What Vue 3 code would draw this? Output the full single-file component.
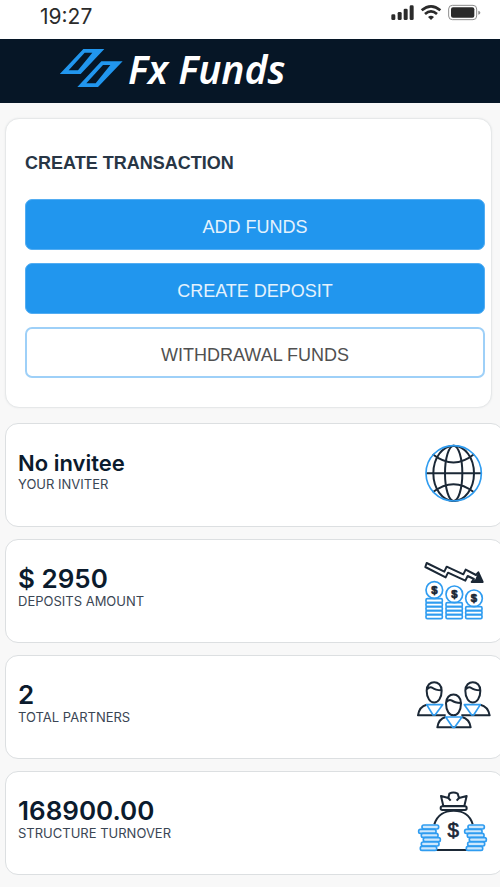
<script setup>
const stats = [
  { id: 'inviter', value: 'No invitee', label: 'YOUR INVITER', viewBox: '48 39 228 192', text: true },
  { id: 'deposits', value: '$ 2950', label: 'DEPOSITS AMOUNT', viewBox: '48 42 228 192' },
  { id: 'partners', value: '2', label: 'TOTAL PARTNERS', viewBox: '48 30 228 192' },
  { id: 'turnover', value: '168900.00', label: 'STRUCTURE TURNOVER', viewBox: '48 33 228 192' },
]

const columns = [
  { x: 78, cy: 135, top: 161, rows: 5 },
  { x: 138, cy: 148, top: 173, rows: 4 },
  { x: 197, cy: 160, top: 185, rows: 3 },
]

const pile = [
  [66, 135, 50],
  [56, 148, 52],
  [64, 160, 50],
  [70, 173, 51],
  [64, 186, 53],
  [61, 199, 49],
  [204, 135, 49],
  [194, 148, 52],
  [202, 160, 50],
  [208, 173, 51],
  [203, 186, 51],
  [199, 199, 49],
]
</script>

<template>
  <div class="page">
    <div class="status">
      <span class="time">19:27</span>
      <svg class="indicators" viewBox="60 9 276 60" aria-hidden="true">
        <g fill="#2b2b2b">
          <rect x="64" y="43" width="12" height="17" rx="4" />
          <rect x="83" y="36" width="12" height="24" rx="4" />
          <rect x="101" y="26" width="12" height="34" rx="4" />
          <rect x="119" y="16" width="12" height="44" rx="4" />
          <path d="M174 51Q183 43 192 51L183 60Z" />
          <rect x="243" y="22" width="70" height="31" rx="6" />
        </g>
        <g fill="none" stroke="#2b2b2b" stroke-width="8">
          <path d="M155 31Q183 7 211 31" />
          <path d="M165 42Q183 26 201 42" />
        </g>
        <rect x="236" y="16" width="84" height="43" rx="11" fill="none" stroke="#8c8c8c" stroke-width="3" />
        <path d="M325 32Q331 34 331 38T325 44Z" fill="#8c8c8c" />
      </svg>
    </div>

    <header class="header">
      <a class="brand" href="#">
        <svg class="mark" viewBox="180 144 189 120" aria-hidden="true">
          <path
            fill="#2196ee"
            fill-rule="evenodd"
            d="M179 222L250 147H313L242 222ZM206 211H234L277 158H254ZM232 261L304 184H368L294 261ZM259 250H287L331 195H309Z"
          />
        </svg>
        <span class="brand-name">Fx Funds</span>
      </a>
    </header>

    <main class="content">
      <section class="panel">
        <h1 class="panel-title">CREATE TRANSACTION</h1>
        <div class="actions">
          <button class="action filled" type="button">ADD FUNDS</button>
          <button class="action filled" type="button">CREATE DEPOSIT</button>
          <button class="action" type="button">WITHDRAWAL FUNDS</button>
        </div>
      </section>

      <section v-for="s in stats" :key="s.id" class="card">
        <div class="info">
          <div class="value" :class="{ word: s.text }">{{ s.value }}</div>
          <div class="label">{{ s.label }}</div>
        </div>
        <svg class="icon" :viewBox="s.viewBox" aria-hidden="true">
          <g v-if="s.id === 'inviter'" class="dark">
            <ellipse cx="161" cy="130" rx="61" ry="83" />
            <ellipse cx="161" cy="130" rx="26" ry="83" />
            <path d="M78 130H244M98 73Q161 122 222 73M98 187Q161 138 222 187" />
            <circle class="blue" cx="161" cy="130" r="83" />
          </g>

          <g v-else-if="s.id === 'deposits'">
            <path
              class="dark"
              d="M80 54L133 80L140 65L190 88L197 74L228 90L235 82L248 111H215L222 102L203 93L196 107L144 83L137 97L76 66Z"
            />
            <path class="head" d="M235 82L248 111H215L226 103Z" />
            <g v-for="c in columns" :key="c.x">
              <circle class="blue" :cx="c.x + 25" :cy="c.cy" r="25" />
              <rect
                v-for="r in c.rows"
                :key="r"
                class="blue"
                :x="c.x"
                :y="c.top + (r - 1) * 12"
                width="49"
                height="12"
                rx="4"
              />
              <text class="dollar small" :x="c.x + 25" :y="c.cy + 12">$</text>
            </g>
          </g>

          <g v-else-if="s.id === 'partners'">
            <g class="dark">
              <path d="M80 119Q58 124 54 151H137M241 119Q264 124 269 151H184" />
              <path d="M80 77C80 43 125 43 125 77C125 124 80 124 80 77ZM81 73Q90 63 98 69T124 76" />
              <path d="M196 77C196 43 241 43 241 77C241 124 196 124 196 77ZM197 73Q206 63 214 69T240 76" />
            </g>
            <path class="blue" d="M80 119H128L105 150H99ZM193 119H241L221 150H215Z" />
            <g class="dark">
              <path class="solid" d="M138 115C138 80 183 80 183 115C183 163 138 163 138 115ZM139 111Q148 101 156 107T182 114" />
              <path d="M137 156Q116 161 112 187H212Q208 161 186 156" />
            </g>
            <path class="blue" d="M137 156H186L164 187H158Z" />
          </g>

          <g v-else>
            <g class="dark">
              <path d="M103 133C112 104 136 92 161 92S210 104 218 133M108 210H202" />
              <path class="solid" d="M130 78L123 48L145 54L148 41Q160 34 173 41L177 54L200 48L193 78Z" />
              <path d="M145 54L152 62M177 54L170 62" />
              <rect class="solid" x="122" y="79" width="78" height="11" rx="5" />
            </g>
            <rect
              v-for="(p, i) in pile"
              :key="i"
              class="blue tint"
              :x="p[0]"
              :y="p[1]"
              :width="p[2]"
              height="12"
              rx="5"
            />
            <text class="dollar" x="160" y="170">$</text>
          </g>
        </svg>
      </section>
    </main>
  </div>
</template>

<style>
body {
  margin: 0;
  background: #f8f8f8;
}
</style>

<style scoped>
.page {
  overflow: hidden;
  background: #f8f8f8;
  color: #0b1b2d;
  font-family: Inter, "Liberation Sans", sans-serif;
}
.status {
  display: flex;
  justify-content: space-between;
  align-items: flex-start;
  box-sizing: border-box;
  height: 39px;
  padding: 3px 18px 0 40px;
  background: #fff;
}
.time {
  font-size: 21px;
  line-height: 28px;
  color: #2b2b2b;
}
.indicators {
  width: 92px;
  height: 20px;
}
.header {
  display: flex;
  align-items: center;
  height: 64px;
  padding: 0 60px;
  background: #061626;
}
.brand {
  display: flex;
  align-items: center;
  gap: 5px;
  color: #fff;
  text-decoration: none;
}
.mark {
  width: 63px;
  height: 40px;
  padding-bottom: 6px;
}
.brand-name {
  font: italic 600 39px/56px "Noto Sans", sans-serif;
  padding-bottom: 4px;
}
.content {
  display: flex;
  flex-direction: column;
  gap: 12px;
  padding: 15px 0 12px 5px;
}
.panel {
  margin: 0 8px 3px 0;
  padding: 34px 6px 29px 19px;
  border: 1px solid #e6e8e9;
  border-radius: 14px;
  background: #fff;
  box-shadow: 0 0 2px #e6e8e9;
}
.panel-title {
  margin: 0 0 26px;
  font: bold 18px/20px "Liberation Sans", sans-serif;
  color: #283645;
}
.actions {
  display: flex;
  flex-direction: column;
  gap: 13px;
}
.action {
  height: 51px;
  padding: 4px 0 0;
  border: 2px solid #9ed0f8;
  border-radius: 7px;
  background: #fff;
  font: 18px/20px "Liberation Sans", sans-serif;
  color: #505050;
}
.filled {
  border: 1px solid #53adf2;
  background: #2196ee;
  color: #e4f2fd;
}
.card {
  display: flex;
  align-items: center;
  justify-content: space-between;
  box-sizing: border-box;
  min-height: 104px;
  margin-right: -4px;
  padding: 0 11px 0 12px;
  border: 1px solid #dcdfe1;
  border-radius: 13px;
  background: #fff;
}
.info {
  padding-bottom: 6px;
}
.value {
  font-size: 26px;
  font-weight: 600;
  line-height: 26px;
}
.word {
  font-size: 22px;
  line-height: 24px;
}
.label {
  font-size: 13px;
  line-height: 18px;
  color: #3a4654;
}
.icon {
  width: 76px;
  height: 64px;
}
.dark,
.blue {
  fill: none;
  stroke: #1b2836;
  stroke-width: 6;
  stroke-linejoin: round;
}
.blue {
  stroke: #2f9cf0;
  stroke-width: 5;
}
.solid {
  fill: #fff;
}
.head {
  fill: #1b2836;
}
.tint {
  fill: #cfe8fc;
}
.dollar {
  fill: #1b2836;
  stroke: #1b2836;
  stroke-width: 2;
  font: 62px "Liberation Sans", sans-serif;
  text-anchor: middle;
}
.small {
  font-size: 34px;
  font-weight: bold;
}
</style>
